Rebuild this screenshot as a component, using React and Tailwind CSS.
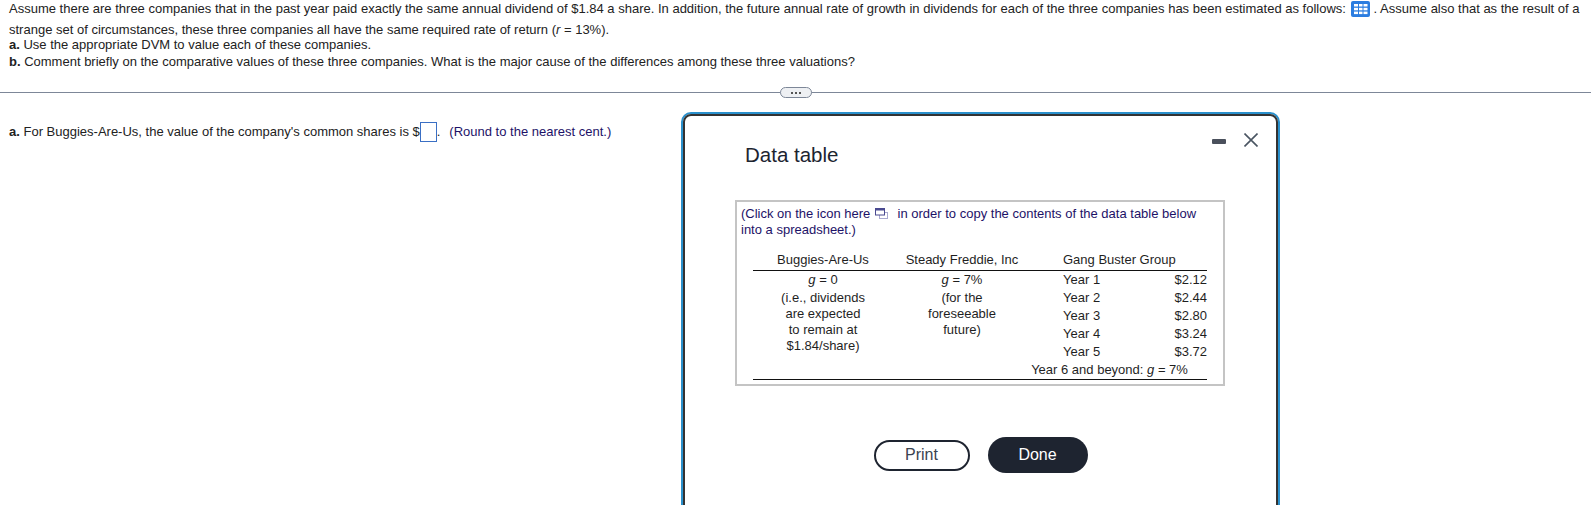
function GridIcon() {
  return (
    <svg width="19" height="16" viewBox="0 0 19 16" className="inline-block align-top mt-[3px] ml-[1px] mr-[4px]">
      <rect x="0" y="0" width="19" height="16" rx="2" fill="#2b7de0" />
      <g fill="#fff">
        <rect x="3" y="3" width="4" height="2.5" />
        <rect x="8" y="3" width="3.5" height="2.5" />
        <rect x="12.5" y="3" width="4" height="2.5" />
        <rect x="3" y="6.8" width="4" height="2.5" />
        <rect x="8" y="6.8" width="3.5" height="2.5" />
        <rect x="12.5" y="6.8" width="4" height="2.5" />
        <rect x="3" y="10.6" width="4" height="2.5" />
        <rect x="8" y="10.6" width="3.5" height="2.5" />
        <rect x="12.5" y="10.6" width="4" height="2.5" />
      </g>
    </svg>
  )
}

function CopyIcon() {
  return (
    <svg width="13" height="11" viewBox="0 0 13 11" className="inline-block align-[-1px] ml-[1px] mr-[6px]">
      <rect x="4.5" y="4.5" width="8" height="6" fill="#fff" stroke="#a9a9d0" />
      <rect x="0.5" y="0.5" width="9" height="6.5" fill="#fff" stroke="#4a4a90" />
      <rect x="0.5" y="0.5" width="9" height="2" fill="#4a4a90" />
    </svg>
  )
}

function DataTable() {
  const years = [
    ["Year 1", "$2.12"],
    ["Year 2", "$2.44"],
    ["Year 3", "$2.80"],
    ["Year 4", "$3.24"],
    ["Year 5", "$3.72"],
  ]
  return (
    <div className="ml-[50px] mr-[51px] h-[186px] border-2 border-[#c4c4c4] text-[13px] text-[#1f1f1f]">
      <div className="px-[4px] pt-[4px] leading-[16px] text-[#1d1267]">
        (Click on the icon here <CopyIcon /> in order to copy the contents of the data table below
        <br />
        into a spreadsheet.)
      </div>
      <div className="mx-[16px] mt-[11px]">
        <div className="grid grid-cols-[140px_138px_176px] h-[22px] leading-[22px] border-b border-[#111]">
          <div className="text-center">Buggies-Are-Us</div>
          <div className="text-center">Steady Freddie, Inc</div>
          <div className="pl-[32px]">Gang Buster Group</div>
        </div>
        <div className="grid grid-cols-[140px_138px_176px] h-[109px] border-b border-[#111]">
          <div className="text-center leading-[16px]">
            <div className="h-[19px] leading-[18px]"><i>g</i> = 0</div>
            (i.e., dividends
            <br />
            are expected
            <br />
            to remain at
            <br />
            $1.84/share)
          </div>
          <div className="text-center leading-[16px]">
            <div className="h-[19px] leading-[18px]"><i>g</i> = 7%</div>
            (for the
            <br />
            foreseeable
            <br />
            future)
          </div>
          <div className="leading-[18px]">
            {years.map(([y, v]) => (
              <div key={y} className="flex justify-between pl-[32px]">
                <span>{y}</span>
                <span>{v}</span>
              </div>
            ))}
            <div className="text-center pr-[19px]">
              Year 6 and beyond: <i>g</i> = 7%
            </div>
          </div>
        </div>
      </div>
    </div>
  )
}

function Modal() {
  return (
    <div className="absolute left-[681px] top-[112px] w-[599px] h-[420px] rounded-[10px] border-2 border-[#2a90cc]">
      <div className="h-full rounded-[8px] border-2 border-[#333] bg-white">
        <div className="flex items-start justify-between pl-[60px] pr-[18px] pt-[24px] h-[84px]">
          <h2 className="text-[20.5px] leading-[30px] text-[#1c2430]">Data table</h2>
          <div className="flex items-center gap-[18px] -mt-[7px]">
            <div className="w-[14px] h-[5px] mt-[2px] rounded-[1px] bg-[#4a505c]" />
            <svg width="14" height="14" viewBox="0 0 14 14" stroke="#4a5562" strokeWidth="1.6" fill="none">
              <path d="M0.5 0.5 L13.5 13.5 M13.5 0.5 L0.5 13.5" />
            </svg>
          </div>
        </div>
        <DataTable />
        <div className="flex items-center justify-center gap-[18px] mt-[51px] text-[16px]">
          <button className="w-[96px] h-[31px] rounded-full border-2 border-[#1e2430] text-[#3a4350]">Print</button>
          <button className="w-[100px] h-[36px] rounded-full bg-[#1e2430] text-white">Done</button>
        </div>
      </div>
    </div>
  )
}

export default function App() {
  return (
    <div className="relative h-[505px] overflow-hidden bg-white font-['Liberation_Sans',Arial,sans-serif] text-[13px] text-[#222]">
      <div className="px-[9px] -mt-[2px]">
        <p className="leading-[21px] h-[42px] whitespace-nowrap">
          Assume there are three companies that in the past year paid exactly the same annual dividend of $1.84 a share. In addition, the future annual rate of growth in dividends for each of the three companies has been estimated as follows: <GridIcon />. Assume also that as the result of a
          <br />
          strange set of circumstances, these three companies all have the same required rate of return (<i>r</i> = 13%).
        </p>
        <p className="leading-[16px] -mt-[3px] mb-[1px]"><b>a.</b> Use the appropriate DVM to value each of these companies.</p>
        <p className="leading-[16px]"><b>b.</b> Comment briefly on the comparative values of these three companies. What is the major cause of the differences among these three valuations?</p>
      </div>
      <div className="relative mt-[22px] h-[1px] bg-[#7d8798]">
        <div className="absolute left-[780px] -top-[5px] w-[32px] h-[11px] rounded-full border border-[#7d8798] bg-[#eef0f3] flex items-center justify-center gap-[2px]">
          <span className="w-[2px] h-[2px] bg-[#555]" />
          <span className="w-[2px] h-[2px] bg-[#555]" />
          <span className="w-[2px] h-[2px] bg-[#555]" />
        </div>
      </div>
      <div className="flex items-center px-[9px] mt-[29px] h-[20px]">
        <span><b>a.</b> For Buggies-Are-Us, the value of the company's common shares is $</span>
        <span className="w-[17px] h-[20px] border border-[#3a6fc4] bg-white" />
        <span>.</span>
        <span className="ml-[9px] text-[#1d1267]">(Round to the nearest cent.)</span>
      </div>
      <Modal />
    </div>
  )
}
